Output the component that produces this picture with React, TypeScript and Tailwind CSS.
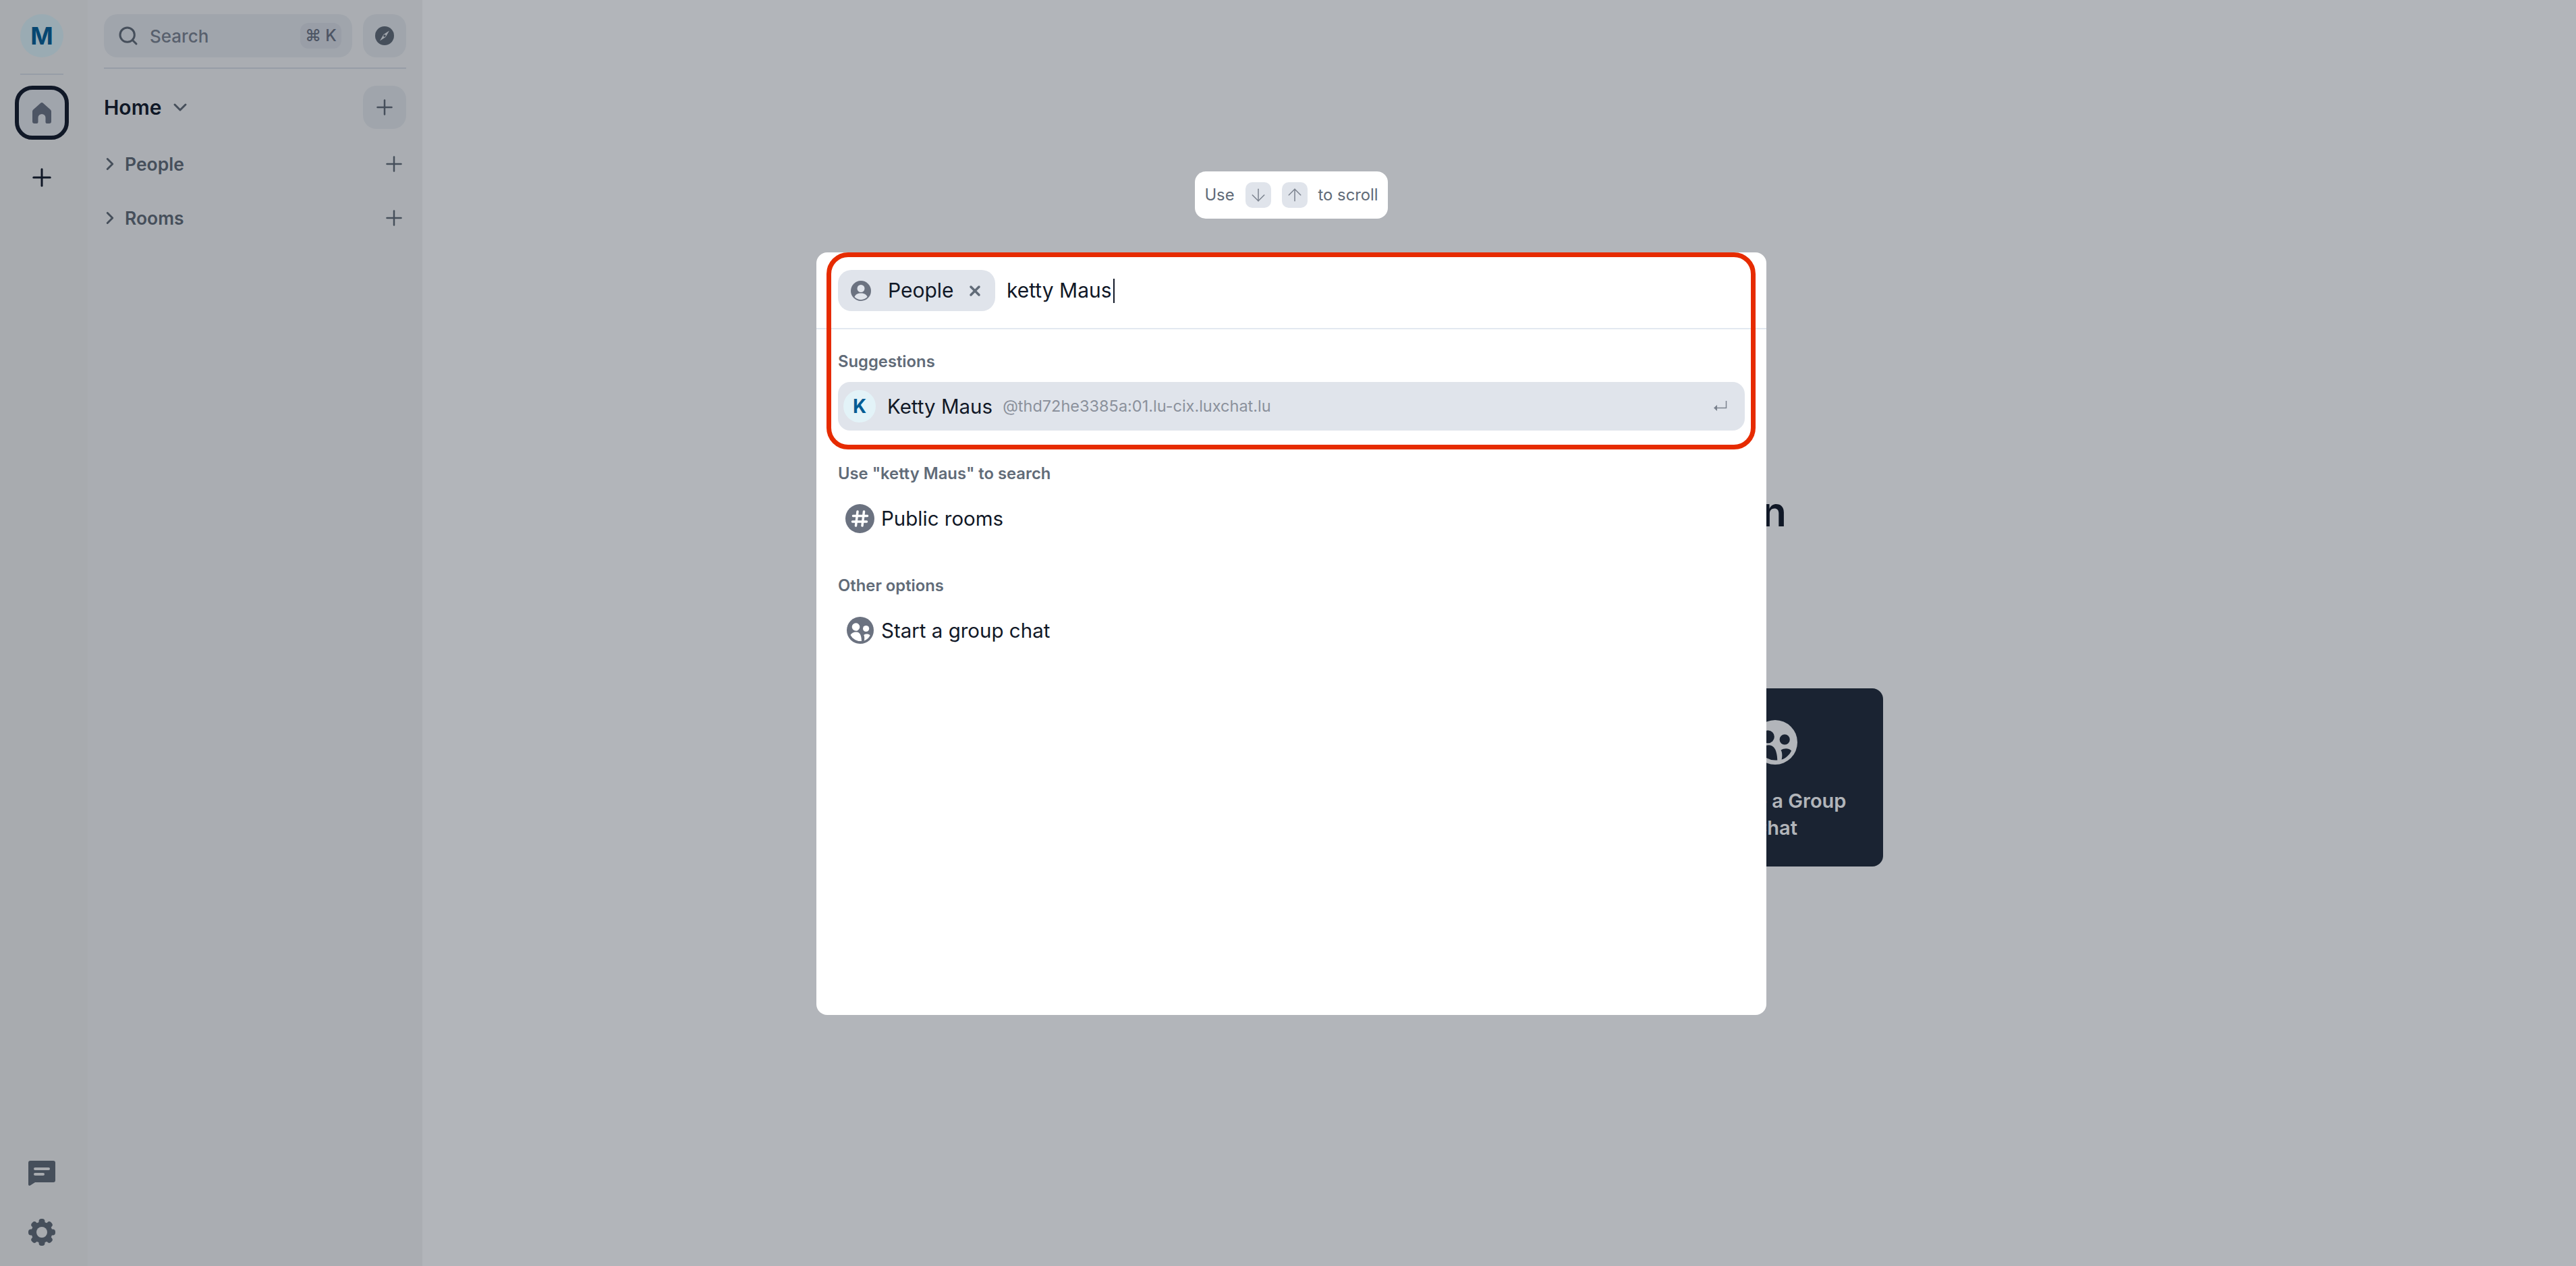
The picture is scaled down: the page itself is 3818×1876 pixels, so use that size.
import { ArrowDown, ArrowUp, ChevronDown, ChevronRight, Plus, Search, X } from 'lucide-react';

const FONT = 'font-[Inter,"Liberation_Sans",sans-serif]';

const HomeIcon = () => (
  <svg width="28" height="31" viewBox="0 0 28 31" fill="currentColor">
    <path d="M12.5.6a2.3 2.3 0 0 1 3 0l11 9.6c1 .9 1.5 2 1.5 3.3V28a3 3 0 0 1-3 3h-3.5a2 2 0 0 1-2-2v-6.5a5.5 5.5 0 0 0-11 0V29a2 2 0 0 1-2 2H3a3 3 0 0 1-3-3V13.5c0-1.300.5-2.400 1.500-3.300z" />
  </svg>
);

const CompassIcon = () => (
  <svg width="28" height="28" viewBox="0 0 28 28">
    <circle cx="14" cy="14" r="14" fill="currentColor" />
    <path d="M21 6.500l-8.500 5.500L7 21.500l8.500-5.500z" fill="#e5e7eb" />
    <circle cx="14" cy="14" r="1.800" fill="currentColor" />
  </svg>
);

const PersonCircle = () => (
  <svg width="30" height="30" viewBox="0 0 30 30">
    <circle cx="15" cy="15" r="15" fill="#6b7280" />
    <circle cx="15" cy="11.500" r="5.500" fill="#e0e4eb" />
    <path d="M5.500 24c1.500-4 5-5.500 9.500-5.500s8 1.500 9.500 5.500a13 13 0 0 1-19 0z" fill="#e0e4eb" />
  </svg>
);

const HashCircle = () => (
  <svg width="43" height="43" viewBox="0 0 43 43">
    <circle cx="21.500" cy="21.500" r="21.500" fill="#6b7280" />
    <path d="M18 11l-2.500 21M27.500 11L25 32M11.500 17.500h21M10.500 26h21" stroke="#fff" strokeWidth="3.500" strokeLinecap="round" fill="none" />
  </svg>
);

// hole is whatever sits behind the icon, the people are cut out with it
const GroupCircle = ({ size, color, hole }: { size: number; color: string; hole: string }) => (
  <svg width={size} height={size} viewBox="0 0 40 40">
    <circle cx="20" cy="20" r="20" fill={color} />
    <circle cx="13.500" cy="15" r="5.800" fill={hole} />
    <circle cx="28.600" cy="17.500" r="4.600" fill={hole} />
    <path d="M5.500 27C7 24.500 10 22.500 14 22.500c4.500 0 7.500 3 8 13.500A16.500 16.500 0 0 1 5.500 27z" fill={hole} />
    <path d="M25.200 27c3-2 7-2 9.400.5-1.600 3.500-4.600 6.500-8.800 8 .7-2.500.7-6.500-.6-8.500z" fill={hole} />
  </svg>
);

const ChatIcon = () => (
  <svg width="40" height="37" viewBox="0 0 40 37">
    <path d="M3 0h34a3 3 0 0 1 3 3v26a3 3 0 0 1-3 3H10l-7 4.500c-1.500 1-3 .3-3-1.500V3a3 3 0 0 1 3-3z" fill="currentColor" />
    <rect x="8" y="10" width="24" height="4" rx="2" fill="#f0f0ef" />
    <rect x="8" y="18" width="16" height="4" rx="2" fill="#f0f0ef" />
  </svg>
);

const GearIcon = () => (
  <svg width="40" height="40" viewBox="0 0 40 40">
    <circle cx="20" cy="20" r="15.500" fill="currentColor" />
    {[0, 45, 90, 135, 180, 225, 270, 315].map((deg) => (
      <rect key={deg} x="15.500" y="0" width="9" height="10" rx="4" fill="currentColor" transform={`rotate(${deg} 20 20)`} />
    ))}
    <circle cx="20" cy="20" r="8" fill="#f0f0ef" />
  </svg>
);

const EnterIcon = () => (
  <svg width="20" height="16" viewBox="0 0 20 16" fill="none">
    <path d="M18.500 0v10.500H5" stroke="#7b828e" strokeWidth="1.500" />
    <path d="M0 10.500l5-4.500v9z" fill="#7b828e" />
  </svg>
);

const Rail = () => (
  <aside className="flex h-full w-[130px] shrink-0 flex-col items-center bg-[#f0f0ef] pt-[21px] pr-[6px] pb-[30px]">
    <div className="flex size-16 items-center justify-center rounded-full bg-[#dcf0f5] text-[36px] font-bold text-[#045d94]">M</div>
    <div className="mt-[24px] h-[2px] w-16 bg-[#d8dce3]" />
    <button className="mt-[16px] flex size-20 items-center justify-center rounded-[26px] border-[6px] border-[#111827] bg-[#e5e7eb] text-[#6b7280]">
      <HomeIcon />
    </button>
    <Plus size={42} strokeWidth={3} absoluteStrokeWidth className="mt-[35px] text-[#111827]" />
    <div className="mt-auto flex flex-col items-center gap-[49px] text-[#606973]">
      <ChatIcon />
      <GearIcon />
    </div>
  </aside>
);

const SectionRow = ({ label }: { label: string }) => (
  <div className="flex h-10 items-center justify-between pl-[1px] text-[#606973]">
    <div className="flex items-center gap-[7px]">
      <ChevronRight size={30} strokeWidth={3} absoluteStrokeWidth className="-ml-[7px] text-[#606973]" />
      <span className="text-[26.500px] leading-10 font-semibold">{label}</span>
    </div>
    <Plus size={36} strokeWidth={2.500} absoluteStrokeWidth />
  </div>
);

const Sidebar = () => (
  <aside className="flex h-full w-[496px] shrink-0 flex-col bg-[#f3f4f3] px-6 pt-[21px]">
    <div className="flex gap-4">
      <div className="flex h-16 flex-1 items-center rounded-[20px] bg-[#e5e7eb] pr-4 pl-[20px] text-[#606973]">
        <Search size={32} strokeWidth={3} absoluteStrokeWidth />
        <span className="ml-[16px] flex-1 text-[26px] font-medium text-[#7b828e]">Search</span>
        <span className="flex h-[38px] w-[61px] items-center justify-center rounded-[12px] bg-[#dadde3] text-[24px] leading-none font-medium text-[#6b7280]">⌘ K</span>
      </div>
      <button className="flex size-16 items-center justify-center rounded-[20px] bg-[#e5e7eb] text-[#606973]">
        <CompassIcon />
      </button>
    </div>
    <div className="mt-[15px] h-[2px] bg-[#d8dce3]" />
    <div className="mt-[25px] flex h-16 items-center justify-between">
      <div className="flex items-center gap-[12px]">
        <span className="text-[30px] font-semibold text-[#111827]">Home</span>
        <ChevronDown size={32} strokeWidth={3} absoluteStrokeWidth className="text-[#606973]" />
      </div>
      <button className="flex size-16 items-center justify-center rounded-[20px] bg-[#e5e7eb] text-[#606973]">
        <Plus size={36} strokeWidth={2.500} absoluteStrokeWidth />
      </button>
    </div>
    <div className="mt-[32px] flex flex-col gap-10">
      <SectionRow label="People" />
      <SectionRow label="Rooms" />
    </div>
  </aside>
);

// only what shows past the dialog is drawn: the end of the heading and the right hand card
const Main = () => (
  <main className="flex h-full flex-1 flex-col items-center bg-white pt-[722px]">
    <div className="w-[1138px]">
      <div className="flex justify-end pr-[143px]">
        <h1 className="text-[60px] leading-[72px] font-semibold text-[#111827]">n</h1>
      </div>
      <div className="mt-[226px] flex justify-end">
        <div className="flex h-[264px] w-[320px] flex-col items-center rounded-[16px] bg-[#1f2937] pt-[47px] text-white">
          <GroupCircle size={66} color="#ffffff" hole="#1f2937" />
          <p className="mt-[34px] w-[250px] text-center text-[29px] leading-[40px] font-semibold">Create a Group Chat</p>
        </div>
      </div>
    </div>
  </main>
);

const Key = ({ children }: { children: React.ReactNode }) => (
  <span className="flex size-[38px] items-center justify-center rounded-[10px] bg-[#e0e4eb] text-[#7b828e]">{children}</span>
);

const GroupLabel = ({ children }: { children: React.ReactNode }) => (
  <div className="flex h-9 items-center text-[23.800px] font-semibold text-[#616b78]">{children}</div>
);

const OptionRow = ({ icon, label }: { icon: React.ReactNode; label: string }) => (
  <div className="mt-3 flex h-[72px] items-center">
    <span className="flex w-[64px] justify-center pl-[1px]">{icon}</span>
    <span className="text-[29.500px] text-[#111827]">{label}</span>
  </div>
);

const Dialog = () => (
  <div className={`${FONT} fixed inset-0 flex flex-col items-center bg-[#111827]/32 pt-[254px] pl-[10px]`}>
    <div className="flex h-[70px] w-[286px] items-center justify-center gap-[16px] rounded-[16px] bg-white text-[23.800px] text-[#616b78]">
      <span>Use</span>
      <Key><ArrowDown size={30} strokeWidth={1.500} absoluteStrokeWidth /></Key>
      <Key><ArrowUp size={30} strokeWidth={1.500} absoluteStrokeWidth /></Key>
      <span>to scroll</span>
    </div>
    <div className="relative mt-[50px] h-[1130px] w-[1408px] rounded-[16px] bg-white">
      <div className="flex h-[114px] items-start border-b-2 border-[#e2e8f0] px-8 pt-[26px]">
        <div className="flex h-[61px] w-[233px] items-center rounded-[20px] bg-[#e0e4eb] pl-[19px]">
          <PersonCircle />
          <span className="ml-[25px] text-[30px] text-[#111827]">People</span>
          <X size={24} strokeWidth={3.500} absoluteStrokeWidth className="ml-[19px] text-[#616b78]" />
        </div>
        <div className="ml-[17px] flex h-[61px] items-center text-[30px] text-[#111827]">
          ketty Maus
          <span className="ml-[2px] h-9 w-[2px] bg-[#111827]" />
        </div>
      </div>
      <div className="px-8 pt-[30px]">
        <GroupLabel>Suggestions</GroupLabel>
        <div className="mt-3 flex h-[72px] items-center rounded-[18px] bg-[#e0e4eb] pr-[26px] pl-2">
          <div className="flex size-12 items-center justify-center rounded-full bg-[#e3f3f8] text-[28px] font-bold text-[#045d94]">K</div>
          <span className="ml-[17px] text-[29.500px] text-[#111827]">Ketty Maus</span>
          <span className="ml-[15px] flex-1 text-[23.500px] text-[#8b919c]">@thd72he3385a:01.lu-cix.luxchat.lu</span>
          <EnterIcon />
        </div>
        <div className="mt-[46px]">
          <GroupLabel>Use "ketty Maus" to search</GroupLabel>
          <OptionRow icon={<HashCircle />} label="Public rooms" />
        </div>
        <div className="mt-[46px]">
          <GroupLabel>Other options</GroupLabel>
          <OptionRow icon={<GroupCircle size={40} color="#6b7280" hole="#ffffff" />} label="Start a group chat" />
        </div>
      </div>
      <div className="absolute top-0 left-[15px] h-[292px] w-[1377px] rounded-[32px] border-[7px] border-[#e62b00]" />
    </div>
  </div>
);

export default function App() {
  return (
    <div className={`${FONT} flex h-[1876px] w-[3818px] overflow-hidden`}>
      <Rail />
      <Sidebar />
      <Main />
      <Dialog />
    </div>
  );
}
